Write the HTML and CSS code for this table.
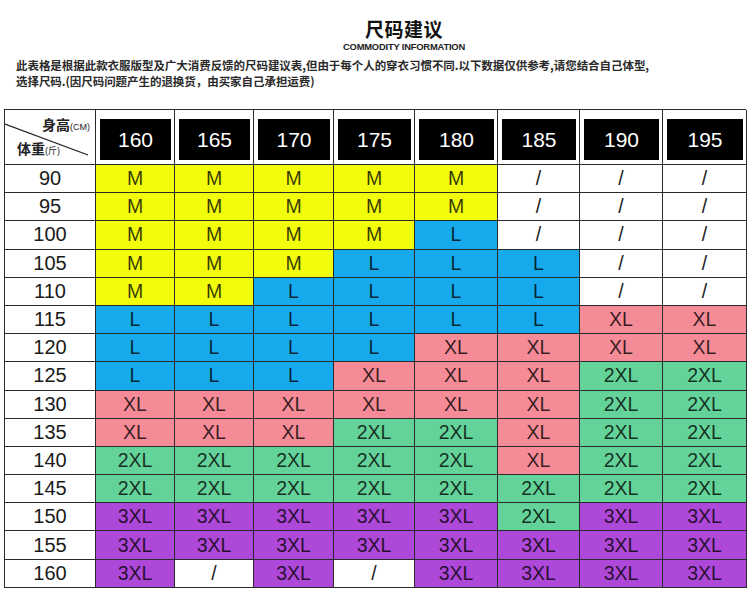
FILE: index.html
```html
<!DOCTYPE html>
<html lang="zh-CN">
<head>
<meta charset="utf-8">
<title>尺码建议</title>
<link rel="stylesheet" href="styles.css">
</head>
<body>
<div class="page">
  <header class="head">
    <h1 class="title">尺码建议</h1>
    <div class="subtitle">COMMODITY INFORMATION</div>
  </header>
  <p class="note">此表格是根据此款衣服版型及广大消费反馈的尺码建议表,但由于每个人的穿衣习惯不同.以下数据仅供参考,请您结合自己体型,<br>选择尺码.(因尺码问题产生的退换货，由买家自己承担运费)</p>

  <div class="chart">
    <div class="corner">
      <svg class="diag" width="91" height="55" viewBox="0 0 91 55"><line x1="0" y1="14" x2="83" y2="45" stroke="#222" stroke-width="1.3"/></svg>
      <div class="h-top">身高<small>(CM)</small></div>
      <div class="h-bot">体重<small>(斤)</small></div>
    </div>
    <div class="hc"><span>160</span></div>
    <div class="hc"><span>165</span></div>
    <div class="hc"><span>170</span></div>
    <div class="hc"><span>175</span></div>
    <div class="hc"><span>180</span></div>
    <div class="hc"><span>185</span></div>
    <div class="hc"><span>190</span></div>
    <div class="hc"><span>195</span></div>

    <div class="rl">90</div><div class="c m">M</div><div class="c m">M</div><div class="c m">M</div><div class="c m">M</div><div class="c m">M</div><div class="c na">/</div><div class="c na">/</div><div class="c na">/</div>
    <div class="rl">95</div><div class="c m">M</div><div class="c m">M</div><div class="c m">M</div><div class="c m">M</div><div class="c m">M</div><div class="c na">/</div><div class="c na">/</div><div class="c na">/</div>
    <div class="rl">100</div><div class="c m">M</div><div class="c m">M</div><div class="c m">M</div><div class="c m">M</div><div class="c l">L</div><div class="c na">/</div><div class="c na">/</div><div class="c na">/</div>
    <div class="rl">105</div><div class="c m">M</div><div class="c m">M</div><div class="c m">M</div><div class="c l">L</div><div class="c l">L</div><div class="c l">L</div><div class="c na">/</div><div class="c na">/</div>
    <div class="rl">110</div><div class="c m">M</div><div class="c m">M</div><div class="c l">L</div><div class="c l">L</div><div class="c l">L</div><div class="c l">L</div><div class="c na">/</div><div class="c na">/</div>
    <div class="rl">115</div><div class="c l">L</div><div class="c l">L</div><div class="c l">L</div><div class="c l">L</div><div class="c l">L</div><div class="c l">L</div><div class="c xl">XL</div><div class="c xl">XL</div>
    <div class="rl">120</div><div class="c l">L</div><div class="c l">L</div><div class="c l">L</div><div class="c l">L</div><div class="c xl">XL</div><div class="c xl">XL</div><div class="c xl">XL</div><div class="c xl">XL</div>
    <div class="rl">125</div><div class="c l">L</div><div class="c l">L</div><div class="c l">L</div><div class="c xl">XL</div><div class="c xl">XL</div><div class="c xl">XL</div><div class="c x2">2XL</div><div class="c x2">2XL</div>
    <div class="rl">130</div><div class="c xl">XL</div><div class="c xl">XL</div><div class="c xl">XL</div><div class="c xl">XL</div><div class="c xl">XL</div><div class="c xl">XL</div><div class="c x2">2XL</div><div class="c x2">2XL</div>
    <div class="rl">135</div><div class="c xl">XL</div><div class="c xl">XL</div><div class="c xl">XL</div><div class="c x2">2XL</div><div class="c x2">2XL</div><div class="c xl">XL</div><div class="c x2">2XL</div><div class="c x2">2XL</div>
    <div class="rl">140</div><div class="c x2">2XL</div><div class="c x2">2XL</div><div class="c x2">2XL</div><div class="c x2">2XL</div><div class="c x2">2XL</div><div class="c xl">XL</div><div class="c x2">2XL</div><div class="c x2">2XL</div>
    <div class="rl">145</div><div class="c x2">2XL</div><div class="c x2">2XL</div><div class="c x2">2XL</div><div class="c x2">2XL</div><div class="c x2">2XL</div><div class="c x2">2XL</div><div class="c x2">2XL</div><div class="c x2">2XL</div>
    <div class="rl">150</div><div class="c x3">3XL</div><div class="c x3">3XL</div><div class="c x3">3XL</div><div class="c x3">3XL</div><div class="c x3">3XL</div><div class="c x2">2XL</div><div class="c x3">3XL</div><div class="c x3">3XL</div>
    <div class="rl">155</div><div class="c x3">3XL</div><div class="c x3">3XL</div><div class="c x3">3XL</div><div class="c x3">3XL</div><div class="c x3">3XL</div><div class="c x3">3XL</div><div class="c x3">3XL</div><div class="c x3">3XL</div>
    <div class="rl">160</div><div class="c x3">3XL</div><div class="c na">/</div><div class="c x3">3XL</div><div class="c na">/</div><div class="c x3">3XL</div><div class="c x3">3XL</div><div class="c x3">3XL</div><div class="c x3">3XL</div>
  </div>
</div>
</body>
</html>
```

FILE: styles.css
```css
* { box-sizing: border-box; }
html, body { margin: 0; padding: 0; background: #fff; }
body {
  width: 750px;
  height: 610px;
  overflow: hidden;
  font-family: "Liberation Sans", Arial, "Noto Sans CJK SC", sans-serif;
  color: #111;
}
.page { padding-top: 18px; }
.head {
  display: flex;
  flex-direction: column;
  align-items: center;
  padding-left: 58px;
}
.title {
  margin: 0;
  font-family: "Noto Sans CJK SC", sans-serif;
  font-weight: 700;
  font-size: 19px;
  line-height: 22px;
  color: #111;
  letter-spacing: 0.5px;
}
.subtitle {
  margin-top: 2px;
  font-family: "Liberation Sans", Arial, sans-serif;
  font-weight: 700;
  font-size: 9.4px;
  line-height: 10px;
  color: #222;
  letter-spacing: -0.2px;
}
.note {
  margin: 5px 0 0 16px;
  font-family: "Noto Sans CJK SC", sans-serif;
  font-weight: 700;
  font-size: 11.5px;
  line-height: 16px;
  color: #2a2a2a;
  letter-spacing: -0.05px;
}
.chart {
  margin: 20px 0 0 4px;
  width: 742px;
  display: grid;
  grid-template-columns: 91px 79px 79px 80px 81px 83px 82px 83px 84px;
  grid-template-rows: 55px repeat(15, 28.2px);
  border-left: 1.5px solid #2a2a2a;
  border-top: 1.5px solid #2a2a2a;
}
.chart > div {
  border-right: 1.5px solid #2a2a2a;
  border-bottom: 1.5px solid #2a2a2a;
}
.corner {
  position: relative;
  background: #fff;
  font-family: "Noto Sans CJK SC", sans-serif;
  font-weight: 700;
  font-size: 14px;
  color: #222;
  display: flex;
  flex-direction: column;
  padding: 5px 5px 0 12px;
}
.corner small {
  font-family: "Liberation Sans", "Noto Sans CJK SC", sans-serif;
  font-weight: 400;
  font-size: 9px;
}
.diag { position: absolute; left: 0; top: 0; }
.h-top { align-self: flex-end; line-height: 18px; }
.h-bot { line-height: 18px; margin-top: 3px; }
.hc {
  background: #fff;
  padding: 9px 3px 4px 4px;
  display: flex;
}
.hc span {
  flex: 1;
  background: #000;
  color: #fff;
  font-size: 21px;
  display: flex;
  align-items: center;
  justify-content: center;
}
.rl {
  background: #fff;
  display: flex;
  align-items: center;
  justify-content: center;
  font-size: 20px;
  color: #1a1a1a;
}
.c {
  display: flex;
  align-items: center;
  justify-content: center;
  font-size: 19.5px;
  color: rgba(0, 0, 0, 0.78);
}
.m { background: #f2fd0c; }
.l { background: #16aaec; }
.xl { background: #f68b98; }
.x2 { background: #64d39a; }
.x3 { background: #ae48d8; }
.na { background: #fff; color: #1a1a1a; }
```
